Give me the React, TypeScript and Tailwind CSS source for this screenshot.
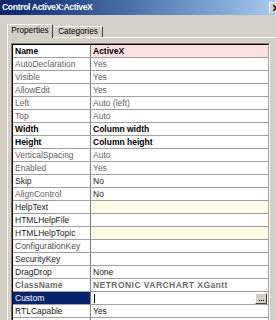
const GRAY = "text-[#646464]";
const DARK = "text-[#1c1c1c]";

type Row = {
  label: string;
  value?: string;
  bold?: boolean;
  labelColor?: string;
  valueColor?: string;
  valueBg?: string;
  spaced?: boolean;
  selected?: boolean;
};

const rows: Row[] = [
  { label: "Name", value: "ActiveX", bold: true, labelColor: "text-black", valueColor: "text-black", valueBg: "bg-[#fde1e1]" },
  { label: "AutoDeclaration", value: "Yes", labelColor: GRAY, valueColor: GRAY },
  { label: "Visible", value: "Yes", labelColor: GRAY, valueColor: GRAY },
  { label: "AllowEdit", value: "Yes", labelColor: GRAY, valueColor: GRAY },
  { label: "Left", value: "Auto (left)", labelColor: GRAY, valueColor: GRAY },
  { label: "Top", value: "Auto", labelColor: GRAY, valueColor: GRAY },
  { label: "Width", value: "Column width", bold: true, labelColor: "text-black", valueColor: "text-black" },
  { label: "Height", value: "Column height", bold: true, labelColor: "text-black", valueColor: "text-black" },
  { label: "VerticalSpacing", value: "Auto", labelColor: GRAY, valueColor: GRAY },
  { label: "Enabled", value: "Yes", labelColor: GRAY, valueColor: GRAY },
  { label: "Skip", value: "No", labelColor: DARK, valueColor: DARK },
  { label: "AlignControl", value: "No", labelColor: GRAY, valueColor: DARK },
  { label: "HelpText", labelColor: DARK, valueBg: "bg-[#fffde6]" },
  { label: "HTMLHelpFile", labelColor: DARK },
  { label: "HTMLHelpTopic", labelColor: DARK, valueBg: "bg-[#fffde6]" },
  { label: "ConfigurationKey", labelColor: "text-[#505050]" },
  { label: "SecurityKey", labelColor: DARK },
  { label: "DragDrop", value: "None", labelColor: DARK, valueColor: DARK },
  { label: "ClassName", value: "NETRONIC VARCHART XGantt", bold: true, spaced: true, labelColor: "text-[#6c6c6c]", valueColor: "text-[#6c6c6c]" },
  { label: "Custom", selected: true },
  { label: "RTLCapable", value: "Yes", labelColor: DARK, valueColor: DARK },
  { label: "" },
];

function PropertyRow({ row }: { row: Row }) {
  const weight = row.bold ? "font-bold" : "font-normal";
  return (
    <div className="flex h-[13px] border-b border-[#a0a0a0]">
      <div
        className={`w-[77px] shrink-0 pl-[2px] leading-[12px] whitespace-nowrap overflow-hidden ${weight} ${
          row.selected ? "bg-[#0a246a] text-white" : `bg-white ${row.labelColor ?? ""}`
        } ${row.spaced ? "tracking-[0.2px]" : ""}`}
      >
        {row.label}
      </div>
      <div
        className={`w-[178px] shrink-0 border-l border-[#808080] pl-[2px] leading-[12px] whitespace-nowrap overflow-hidden flex items-center ${weight} ${
          row.valueBg ?? "bg-white"
        } ${row.valueColor ?? ""} ${row.spaced ? "tracking-[0.45px]" : ""}`}
      >
        {row.selected ? (
          <>
            <span className="w-px h-[9px] bg-black ml-[1px]" />
            <span className="ml-auto mr-px w-[12px] h-[11px] bg-[#d4d0c8] border-t border-l border-white border-r border-b border-r-[#404040] border-b-[#404040] flex items-end justify-center pb-[2px] gap-px">
              <span className="w-px h-px bg-black" />
              <span className="w-px h-px bg-black" />
              <span className="w-px h-px bg-black" />
            </span>
          </>
        ) : (
          row.value
        )}
      </div>
    </div>
  );
}

export default function App() {
  return (
    <div className="w-[276px] h-[320px] overflow-hidden bg-[#d4d0c8] flex flex-col font-['Liberation_Sans',Arial,sans-serif] text-[8.5px]">
      <div className="h-[15px] shrink-0 flex items-center pl-[2px] bg-gradient-to-r from-[#0a246a] to-[#a6caf0] overflow-hidden">
        <span className="text-white font-bold text-[8.6px] tracking-[-0.35px] whitespace-nowrap">
          Control ActiveX:ActiveX
        </span>
        <span className="ml-auto -mr-[9px] w-[16px] h-[11px] shrink-0 bg-[#d4d0c8] border-t border-l border-white flex items-center pl-[3px]">
          <svg width="6" height="6" viewBox="0 0 6 6">
            <path d="M0 0 L6 6 M6 0 L0 6" stroke="#000" strokeWidth="1.4" />
          </svg>
        </span>
      </div>

      <div className="mt-[9px] h-[13px] shrink-0 flex items-end pl-[7px] text-[8.2px] text-black">
        <div className="relative z-10 -mb-px h-[14px] w-[46px] bg-[#d4d0c8] border-t border-l border-white border-r border-r-[#404040] flex justify-center pt-[1px] leading-[10px]">
          Properties
        </div>
        <div className="h-[11px] w-[49px] ml-px bg-[#d4d0c8] border-t border-white border-r border-r-[#404040] flex justify-center leading-[10px]">
          Categories
        </div>
      </div>

      <div className="flex-1 ml-[7px] border-t border-l border-white pt-[5px] pl-[3px]">
        <div className="w-[259px] border-t border-l border-[#808080] border-r border-r-white">
          <div className="border-t border-l border-black border-r border-r-[#a0a0a0]">
            {rows.map((row, i) => (
              <PropertyRow key={i} row={row} />
            ))}
          </div>
        </div>
      </div>
    </div>
  );
}
